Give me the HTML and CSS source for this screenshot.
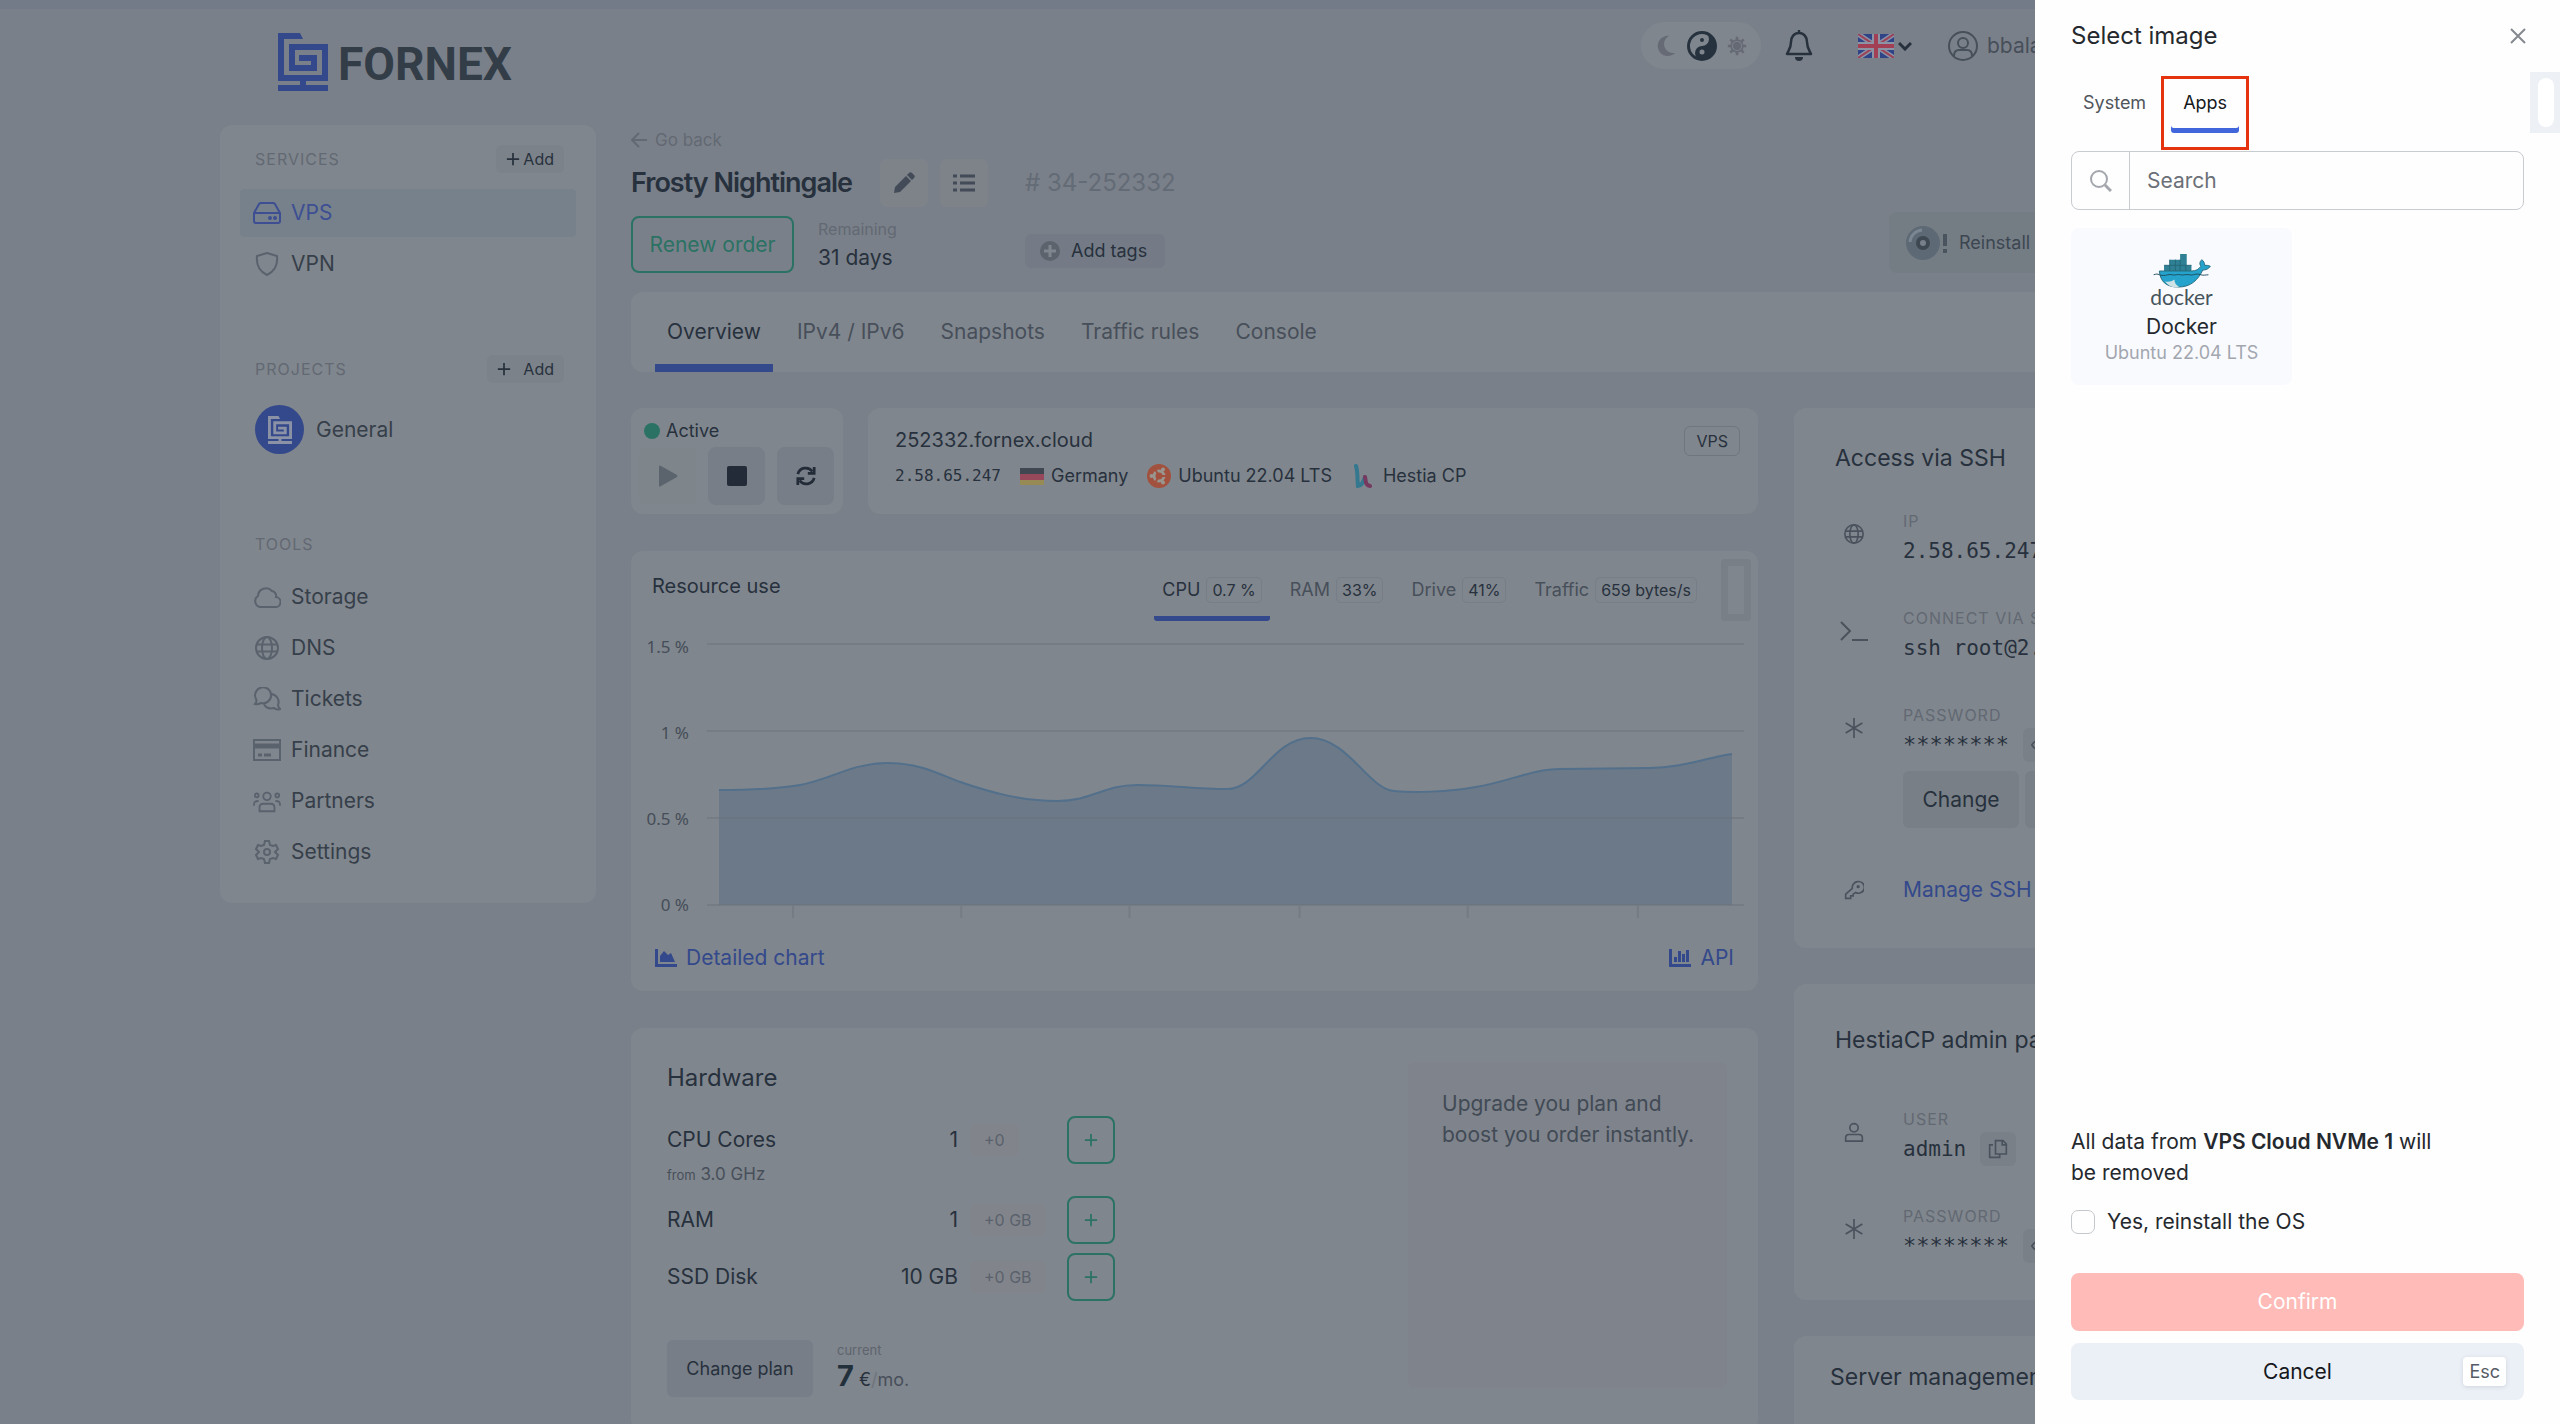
FILE: index.html
```html
<!doctype html>
<html lang="en">
    <head>
        <meta charset="UTF-8" />
        <meta name="viewport" content="width=device-width, initial-scale=1.0" />
        <title>Frosty Nightingale - Fornex</title>
        <link rel="stylesheet" href="styles.css">
    </head>
    <body>
        <!-- Shared icons -->
        <svg class="sprite" aria-hidden="true">
            <symbol id="i-mark" viewBox="0 0 50 58">
                <path fill="currentColor" d="M0 0h22l3 6H6v36h38V17H17v15h16v-4H21v-6h18v16H11V11h39v37H28v4h22v6H0v-6h22v-4H0z" />
            </symbol>
            <symbol id="i-globe" viewBox="0 0 24 24">
                <circle cx="12" cy="12" r="11" />
                <ellipse cx="12" cy="12" rx="5" ry="11" />
                <path d="M1.500 8.500h21M1.500 15.500h21" />
            </symbol>
            <symbol id="i-plus" viewBox="0 0 16 16"><path d="M8 1v14M1 8h14" /></symbol>
            <symbol id="i-star" viewBox="0 0 24 24"><path d="M12 0v24M2 6l20 12M22 6L2 18" /></symbol>
            <symbol id="i-eye" viewBox="0 0 24 24"><path d="M1 12s4-7 11-7 11 7 11 7-4 7-11 7S1 12 1 12z" /><circle cx="12" cy="12" r="3" /></symbol>
        </svg>

        <div class="page">
            <header class="header">
                <a class="logo" href="#" aria-label="Fornex">
                    <svg class="logo-mark"><use href="#i-mark" /></svg>
                    <span>FORNEX</span>
                </a>
                <div class="header-tools">
                    <div class="theme">
                        <button aria-label="Dark theme"><svg class="ic-22" viewBox="0 0 24 24"><path fill="currentColor" d="M15 1a11 11 0 1 0 7 18.500A10 10 0 0 1 15 1z" /></svg></button>
                        <button class="theme-on" aria-label="Auto theme">
                            <svg class="ic-30" viewBox="0 0 30 30">
                                <circle cx="15" cy="15" r="13.500" fill="none" stroke="currentColor" stroke-width="3" />
                                <path fill="currentColor" d="M15 1a14 14 0 0 1 0 28 7 7 0 0 1 0-14 7 7 0 0 0 0-14z" />
                                <circle cx="15" cy="9" r="2" fill="currentColor" />
                                <circle cx="15" cy="21" r="2.500" fill="#80868d" />
                            </svg>
                        </button>
                        <button aria-label="Light theme">
                            <svg class="ic-20" viewBox="0 0 24 24" fill="none" stroke="currentColor" stroke-width="2">
                                <circle cx="12" cy="12" r="4" fill="currentColor" /><circle cx="12" cy="12" r="7" />
                                <path stroke-width="3" d="M12 1v4M12 19v4M1 12h4M19 12h4M4 4l3 3M17 17l3 3M20 4l-3 3M7 17l-3 3" />
                            </svg>
                        </button>
                    </div>
                    <button class="bell" aria-label="Notifications">
                        <svg viewBox="0 0 28 32" fill="none" stroke="currentColor" stroke-width="2.500" stroke-linejoin="round">
                            <path d="M14 3c-5 0-8 4-8 9 0 6-2 8-4 12h24c-2-4-4-6-4-12 0-5-3-9-8-9zM14 0v3" />
                            <path fill="currentColor" stroke="none" d="M10 27h8a4 4 0 0 1-8 0z" />
                        </svg>
                    </button>
                    <button class="lang" aria-label="Language">
                        <svg class="flag-uk" viewBox="0 0 36 24" preserveAspectRatio="none">
                            <rect width="36" height="24" rx="2" fill="#2f4486" />
                            <path d="M0 0l36 24M36 0L0 24" stroke="#8c93a5" stroke-width="5" />
                            <path d="M0 0l36 24M36 0L0 24" stroke="#9c4258" stroke-width="2" />
                            <path d="M18 0v24M0 12h36" stroke="#8c93a5" stroke-width="8" />
                            <path d="M18 0v24M0 12h36" stroke="#a33f55" stroke-width="4" />
                        </svg>
                        <svg class="chev" viewBox="0 0 14 10" fill="none" stroke="currentColor" stroke-width="3"><path d="M1 2l6 6 6-6" /></svg>
                    </button>
                    <a class="user" href="#">
                        <svg class="ic-30" viewBox="0 0 30 30" fill="none" stroke="currentColor" stroke-width="2">
                            <circle cx="15" cy="15" r="14" /><circle cx="15" cy="12" r="5" />
                            <path d="M6 25c0-4 2-6 5-6h8c3 0 5 2 5 6" />
                        </svg>
                        <span>bbalance</span>
                    </a>
                </div>
            </header>

            <div class="layout">
                <nav class="card sidebar">
                    <div class="side-head">
                        <span class="caps">Services</span>
                        <button class="add-btn"><svg class="ic-14"><use href="#i-plus" /></svg>Add</button>
                    </div>
                    <a class="side-link active" href="#">
                        <svg viewBox="0 0 28 24"><path d="M1 12L6 3q1-1 2-1h12q1 0 2 1l5 9v8q0 2-2 2H3q-2 0-2-2zM1 12h26" /><circle cx="17" cy="17" r="1" /><circle cx="22" cy="17" r="1" /></svg>VPS
                    </a>
                    <a class="side-link" href="#">
                        <svg viewBox="0 0 28 24"><path d="M14 1l10 3c1 9-2 15-10 19C6 19 3 13 4 4z" /></svg>VPN
                    </a>
                    <div class="side-head projects">
                        <span class="caps">Projects</span>
                        <button class="add-btn wide"><svg class="ic-14"><use href="#i-plus" /></svg>Add</button>
                    </div>
                    <a class="project" href="#">
                        <span class="avatar"><svg><use href="#i-mark" /></svg></span>General
                    </a>
                    <div class="side-head tools"><span class="caps">Tools</span></div>
                    <a class="side-link" href="#"><svg viewBox="0 0 28 24"><path d="M7 22a6 6 0 0 1-2-11 8 8 0 0 1 14-5 5 5 0 0 1 4 6 5 5 0 0 1-1 10z" /></svg>Storage</a>
                    <a class="side-link" href="#"><svg viewBox="0 0 24 24"><use href="#i-globe" /></svg>DNS</a>
                    <a class="side-link" href="#"><svg viewBox="0 0 28 24"><path d="M2 17c1-1 2-3 1-5a8 8 0 1 1 5 4c-2 1-4 2-6 1zM18 7a8 8 0 0 1 7 11c0 2 1 3 2 4-3 1-5 0-6-1-4 1-8 0-10-4" /></svg>Tickets</a>
                    <a class="side-link" href="#"><svg viewBox="0 0 28 24"><path d="M1 2h26v20H1z" /><path d="M1 8h26" stroke-width="5" /><path d="M5 17h4M11 17h7" stroke-width="3" /></svg>Finance</a>
                    <a class="side-link" href="#"><svg viewBox="0 0 30 24"><circle cx="15" cy="7" r="4" /><circle cx="4" cy="6" r="2" /><circle cx="26" cy="6" r="2" /><path d="M7 23v-4c0-3 2-4 4-4h8c2 0 4 1 4 4v4zM1 17c0-4 1-5 5-5M29 17c0-4-1-5-5-5" /></svg>Partners</a>
                    <a class="side-link" href="#"><svg viewBox="0 0 24 24"><path d="M10 1h4l1 4 3 1 3-1 2 4-3 3 3 3-2 4-3-1-3 1-1 4h-4l-1-4-3-1-3 1-2-4 3-3-3-3 2-4 3 1 3-1z" /><circle cx="12" cy="12" r="3" /></svg>Settings</a>
                </nav>

                <main class="content">
                    <a class="back" href="#">
                        <svg class="ic-16" viewBox="0 0 16 16" fill="none" stroke="currentColor" stroke-width="2"><path d="M8 1L1 8l7 7M1 8h15" /></svg>Go back
                    </a>
                    <div class="title-row">
                        <h1>Frosty Nightingale</h1>
                        <button class="square" aria-label="Rename"><svg class="ic-22" viewBox="0 0 22 22"><path fill="currentColor" d="M1 21l1-6L13 4l5 5L7 20zM14 3l2-2c1-1 2-1 3 0l2 2c1 1 1 2 0 3l-2 2z" /></svg></button>
                        <button class="square" aria-label="List"><svg class="ic-22" viewBox="0 0 22 20" stroke="currentColor" stroke-width="3"><path d="M0 3h4M0 10h4M0 17h4M7 3h15M7 10h15M7 17h15" /></svg></button>
                        <span class="order-id"># 34-252332</span>
                    </div>
                    <div class="order-row">
                        <button class="renew">Renew order</button>
                        <div class="remaining"><small>Remaining</small><span>31 days</span></div>
                        <button class="tags">
                            <svg class="ic-20" viewBox="0 0 20 20"><circle cx="10" cy="10" r="10" fill="#5c636d" /><path d="M10 4v12M4 10h12" stroke="#80868d" stroke-width="3" /></svg>Add tags
                        </button>
                        <button class="reinstall">
                            <svg viewBox="0 0 44 36">
                                <circle cx="18" cy="18" r="17" fill="#5d6975" /><path d="M5 17A13 13 0 0 1 17 5" fill="none" stroke="#7a8793" stroke-width="3" />
                                <circle cx="18" cy="18" r="5" fill="#78808a" stroke="#3e4853" stroke-width="4" /><path d="M40 9v12M40 24v4" stroke="#4a545f" stroke-width="4" />
                            </svg>Reinstall
                        </button>
                    </div>

                    <nav class="card tabs">
                        <a class="on" href="#">Overview</a>
                        <a href="#">IPv4 / IPv6</a>
                        <a href="#">Snapshots</a>
                        <a href="#">Traffic rules</a>
                        <a href="#">Console</a>
                    </nav>

                    <div class="columns">
                        <div class="col">
                            <div class="server-row">
                                <section class="card status">
                                    <p><i class="dot"></i>Active</p>
                                    <div class="power">
                                        <button disabled aria-label="Start"><svg viewBox="0 0 20 22"><path fill="currentColor" d="M1 1q1-1 2 0l16 9q1 1 0 2L3 21q-1 1-2 0z" /></svg></button>
                                        <button aria-label="Stop"><svg viewBox="0 0 20 20"><rect width="20" height="20" rx="2" fill="currentColor" /></svg></button>
                                        <button aria-label="Restart"><svg viewBox="0 0 22 22" fill="none" stroke="currentColor" stroke-width="3"><path d="M2 9a9 9 0 0 1 16-3M20 1v7h-7M20 13a9 9 0 0 1-16 3M2 21v-7h7" /></svg></button>
                                    </div>
                                </section>
                                <section class="card info">
                                    <div>
                                        <p class="domain">252332.fornex.cloud</p>
                                        <div class="facts">
                                            <code>2.58.65.247</code>
                                            <span><svg class="flag-de" viewBox="0 0 24 17"><path fill="#414750" d="M0 0h24v6H0z" /><path fill="#97485a" d="M0 6h24v6H0z" /><path fill="#978a55" d="M0 12h24v5H0z" /></svg>Germany</span>
                                            <span><svg class="ic-24" viewBox="0 0 24 24"><circle cx="12" cy="12" r="12" fill="#a1513d" /><circle cx="12" cy="12" r="5" fill="none" stroke="#99958f" stroke-width="3" /><path d="M12 12L8 5M12 12l-4 7M12 12h9" stroke="#a1513d" stroke-width="2" /><circle cx="4.500" cy="12" r="2" fill="#99958f" /><circle cx="16" cy="5.500" r="2" fill="#99958f" /><circle cx="16" cy="18.500" r="2" fill="#99958f" /></svg>Ubuntu 22.04 LTS</span>
                                            <span><svg class="hestia" viewBox="0 0 18 24" fill="none" stroke-width="4" stroke-linecap="round"><path stroke="#33788f" d="M2 2c2 6 1 12 2 20 4 0 5-4 7-9" /><path stroke="#77395f" d="M11 13c1 4 0 8 5 9" /></svg>Hestia CP</span>
                                        </div>
                                    </div>
                                    <span class="type">VPS</span>
                                </section>
                            </div>

                            <section class="card usage">
                                <div class="usage-head">
                                    <h2>Resource use</h2>
                                    <div class="metrics">
                                        <button class="on">CPU <b>0.7 %</b></button>
                                        <button>RAM <b>33%</b></button>
                                        <button>Drive <b>41%</b></button>
                                        <button>Traffic <b>659 bytes/s</b></button>
                                    </div>
                                    <i class="scroll-hint"></i>
                                </div>
                                <div class="chart">
                                    <div class="axis"><span>1.5 %</span><span>1 %</span><span>0.5 %</span><span>0 %</span></div>
                                    <svg viewBox="0 0 1036 280" preserveAspectRatio="none">
                                        <path class="area" d="M12 267V152C50 152 75 150 93 147C125 141 145 125 180 125C215 125 235 138 253 144C285 155 315 163 350 163C385 163 395 147 430 147C465 147 485 151 520 151C550 151 565 100 603 100C640 100 660 150 686 153C705 155 740 154 768 149C800 144 825 131 852 131L942 130C975 130 1000 119 1024 116V267z" />
                                        <path class="curve" d="M12 152C50 152 75 150 93 147C125 141 145 125 180 125C215 125 235 138 253 144C285 155 315 163 350 163C385 163 395 147 430 147C465 147 485 151 520 151C550 151 565 100 603 100C640 100 660 150 686 153C705 155 740 154 768 149C800 144 825 131 852 131L942 130C975 130 1000 119 1024 116" />
                                        <path class="grid" d="M0 6h1036M0 93h1036M0 180h1036M0 267h1036M86 267v15M254 267v15M422 267v15M592 267v15M760 267v15M930 267v15" />
                                    </svg>
                                </div>
                                <div class="usage-foot">
                                    <a href="#"><svg viewBox="0 0 22 18"><path fill="currentColor" d="M0 0h3v15h19v3H0zM5 13V7l4-5 4 4 3-2 4 9z" /></svg>Detailed chart</a>
                                    <a href="#"><svg viewBox="0 0 22 18"><path fill="currentColor" d="M0 0h3v15h19v3H0zM5 8h3v5H5zM9 2h3v11H9zM13 5h3v8h-3zM17 1h3v12h-3z" /></svg>API</a>
                                </div>
                            </section>

                            <section class="card hardware">
                                <div class="specs">
                                    <h2>Hardware</h2>
                                    <div class="spec">
                                        <span>CPU Cores</span><span class="val">1</span><span class="extra">+0</span>
                                        <button class="plus" aria-label="Add CPU"><svg class="ic-14"><use href="#i-plus" /></svg></button>
                                    </div>
                                    <p class="freq"><small>from</small> 3.0 GHz</p>
                                    <div class="spec">
                                        <span>RAM</span><span class="val">1</span><span class="extra">+0 GB</span>
                                        <button class="plus" aria-label="Add RAM"><svg class="ic-14"><use href="#i-plus" /></svg></button>
                                    </div>
                                    <div class="spec">
                                        <span>SSD Disk</span><span class="val">10 GB</span><span class="extra">+0 GB</span>
                                        <button class="plus" aria-label="Add disk"><svg class="ic-14"><use href="#i-plus" /></svg></button>
                                    </div>
                                    <div class="plan">
                                        <button>Change plan</button>
                                        <div><small>current</small><p><strong>7</strong> <em>€</em><s>/</s>mo.</p></div>
                                    </div>
                                </div>
                                <div class="upgrade">Upgrade you plan and<br />boost you order instantly.</div>
                            </section>
                        </div>

                        <div class="col side-col">
                            <section class="card access">
                                <h2>Access via SSH</h2>
                                <div class="cred">
                                    <svg viewBox="0 0 24 24"><use href="#i-globe" /></svg>
                                    <div><span class="caps">IP</span><code>2.58.65.247</code></div>
                                </div>
                                <div class="cred">
                                    <svg class="term" viewBox="0 0 28 20"><path d="M1 1l9 9-9 9M12 19h16" /></svg>
                                    <div><span class="caps">Connect via SSH</span><code>ssh root@2.58.65.247</code></div>
                                </div>
                                <div class="cred">
                                    <svg viewBox="0 0 24 24"><use href="#i-star" /></svg>
                                    <div>
                                        <span class="caps">Password</span>
                                        <code class="stars">******** <button class="mini" aria-label="Show"><svg><use href="#i-eye" /></svg></button></code>
                                        <div class="cred-actions"><button>Change</button><button>Reset</button></div>
                                    </div>
                                </div>
                                <div class="cred key">
                                    <svg viewBox="0 0 24 24"><path d="M16 2a7 7 0 1 1-2 13l-3 2v2H8v3H2v-5l8-7a7 7 0 0 1 6-8z" /><circle cx="17" cy="8" r="1" /></svg>
                                    <a href="#">Manage SSH keys</a>
                                </div>
                            </section>
                            <section class="card hestia-card">
                                <h2>HestiaCP admin panel</h2>
                                <div class="cred">
                                    <svg viewBox="0 0 24 24"><circle cx="12" cy="7" r="5" /><path d="M2 23v-4c0-3 2-4 4-4h12c2 0 4 1 4 4v4z" /></svg>
                                    <div>
                                        <span class="caps">User</span>
                                        <code>admin <button class="mini" aria-label="Copy"><svg viewBox="0 0 24 24"><path d="M9 2h9l4 4v12H9zM17 2v5h5M6 7H2v15h12v-4" /></svg></button></code>
                                    </div>
                                </div>
                                <div class="cred">
                                    <svg viewBox="0 0 24 24"><use href="#i-star" /></svg>
                                    <div>
                                        <span class="caps">Password</span>
                                        <code class="stars">******** <button class="mini" aria-label="Show"><svg><use href="#i-eye" /></svg></button></code>
                                    </div>
                                </div>
                            </section>
                            <section class="card manage"><h2>Server management</h2></section>
                        </div>
                    </div>
                </main>
            </div>
        </div>

        <aside class="drawer">
            <div class="drawer-head">
                <h2>Select image</h2>
                <button aria-label="Close"><svg viewBox="0 0 16 16" fill="none" stroke="currentColor" stroke-width="2"><path d="M1 1l14 14M15 1L1 15" /></svg></button>
            </div>
            <div class="drawer-tabs">
                <button>System</button>
                <button class="on">Apps</button>
                <i class="drawer-scroll"></i>
            </div>
            <div class="search">
                <label for="search" aria-label="Search"><svg viewBox="0 0 22 22" fill="none" stroke="currentColor" stroke-width="2"><circle cx="9" cy="9" r="8" /><path stroke-width="3" d="M15 15l6 6" /></svg></label>
                <input id="search" type="text" placeholder="Search" />
            </div>
            <button class="image">
                <svg viewBox="0 0 60 36">
                    <g fill="#2f8094"><path d="M11 12h29v6H11zM17 6h16v6H17zM28 0h7v12h-7z" /></g>
                    <path stroke="#23677a" d="M17 6v12M23 6v12M28 6v12M34 12v6M11 12h29" />
                    <path fill="#25a3cd" stroke="#276a7d" d="M6 18h34c5 0 8-2 10-5-2-3-1-5 1-7 2 2 3 3 3 6 2 0 4 0 6 1-2 3-5 4-8 4-5 10-12 18-26 18C13 35 7 29 6 18z" />
                    <path fill="#cfe3e6" d="M12 29c4 1 7 0 10-2 0 4 2 6 5 8-7 1-11-1-15-6z" />
                    <path fill="none" stroke="#1f4d5c" d="M0 22c3-1 4-1 6 0s6 1 9 0 6 1 9 0 6 1 9 0 6 1 9 0 5-1 8 0 5 0 8 0" />
                </svg>
                <span class="wordmark">docker</span>
                <span>Docker</span>
                <small>Ubuntu 22.04 LTS</small>
            </button>
            <div class="drawer-foot">
                <p>All data from <strong>VPS Cloud NVMe 1</strong> will<br />be removed</p>
                <label class="check"><input type="checkbox" />Yes, reinstall the OS</label>
                <button class="confirm" disabled>Confirm</button>
                <button class="cancel">Cancel<kbd>Esc</kbd></button>
            </div>
        </aside>
    </body>
</html>
```
FILE: styles.css
```css
:root {
    --page: #7a8089;
    --card: #80868d;
    --soft: #777e87;
    --text: #27313d;
    --nav: #363f4a;
    --muted: #474f5a;
    --faint: #626973;
    --blue: #33498b;
    --green: #2b7264;
    --line: #6f767f;
}

* {
    margin: 0;
    padding: 0;
    box-sizing: border-box;
}

body {
    font: 21px/32px Inter, "Liberation Sans", sans-serif;
    background: var(--page);
    color: var(--text);
    height: 100vh;
    overflow: hidden;
}

a {
    color: inherit;
    text-decoration: none;
}

button {
    font: inherit;
    color: inherit;
    background: none;
    border: 0;
}

h1,
h2 {
    font-size: 24px;
    font-weight: 400;
}

.sprite {
    position: absolute;
    width: 0;
    height: 0;
}

.ic-14 { width: 14px; height: 14px; stroke: currentColor; stroke-width: 2; }
.ic-16 { width: 16px; height: 16px; }
.ic-20 { width: 20px; height: 20px; }
.ic-22 { width: 22px; height: 22px; }
.ic-24 { width: 24px; height: 24px; }
.ic-30 { width: 30px; height: 30px; }

.page {
    border-top: 9px solid #747b88;
}

.card {
    background: var(--card);
    border-radius: 12px;
}

.caps {
    font-size: 16px;
    line-height: 24px;
    letter-spacing: 1px;
    text-transform: uppercase;
    color: var(--faint);
}

/* Header */
.header {
    max-width: 2120px;
    height: 116px;
    margin: 0 auto;
    padding: 13px 58px 0;
    display: flex;
    align-items: flex-start;
    justify-content: space-between;
}

.logo {
    display: flex;
    align-items: center;
    gap: 10px;
    margin-top: 9px;
    font: 700 46px/58px Roboto, sans-serif;
    color: #333d48;
}

.logo span {
    padding-top: 4px;
}

.logo-mark {
    width: 50px;
    height: 58px;
    color: var(--blue);
}

.header-tools {
    display: flex;
    align-items: center;
    height: 47px;
    width: 641px;
}

.header-tools button {
    display: flex;
    align-items: center;
}

.theme {
    display: flex;
    align-items: center;
    gap: 10px;
    height: 47px;
    padding: 0 14px;
    border-radius: 24px;
    background: var(--card);
    color: #656a75;
}

.theme-on {
    color: #26333f;
}

.bell {
    margin-left: 24px;
}

.bell svg {
    width: 28px;
    height: 32px;
}

.lang {
    gap: 4px;
    margin-left: 45px;
}

.flag-uk {
    width: 36px;
    height: 24px;
}

.chev {
    width: 14px;
    height: 10px;
}

.user {
    display: flex;
    align-items: center;
    gap: 9px;
    margin-left: 36px;
    color: var(--muted);
}

/* Sidebar */
.layout {
    max-width: 2120px;
    margin: 0 auto;
    display: grid;
    grid-template-columns: 376px minmax(0, 1fr);
    gap: 35px;
    align-items: start;
}

.sidebar {
    padding: 20px 20px 24px;
}

.side-head {
    display: flex;
    align-items: center;
    justify-content: space-between;
    height: 28px;
    padding: 0 12px 0 15px;
    margin-bottom: 16px;
}

.projects {
    margin-top: 67px;
    margin-bottom: 22px;
}

.tools {
    margin-top: 76px;
    margin-bottom: 15px;
}

.add-btn {
    display: flex;
    align-items: center;
    gap: 3px;
    padding: 0 10px;
    border-radius: 6px;
    background: #7c8289;
    font-size: 16px;
    line-height: 28px;
}

.add-btn.wide {
    gap: 12px;
}

.side-link {
    display: flex;
    align-items: center;
    gap: 10px;
    height: 48px;
    margin-bottom: 3px;
    padding-left: 13px;
    border-radius: 4px;
    color: var(--nav);
}

.side-link svg {
    width: 28px;
    height: 24px;
    fill: none;
    stroke: #5a626d;
    stroke-width: 2;
}

.side-link.active {
    background: #76818b;
    color: #3d4e93;
}

.side-link.active svg {
    stroke: #3d4e93;
}

.project {
    display: flex;
    align-items: center;
    gap: 12px;
    padding-left: 15px;
    color: var(--nav);
}

.avatar {
    display: grid;
    place-items: center;
    width: 49px;
    height: 49px;
    border-radius: 50%;
    background: var(--blue);
    color: #8b92a5;
}

.avatar svg {
    width: 24px;
    height: 28px;
}

/* Order heading */
.back {
    display: flex;
    align-items: center;
    gap: 8px;
    font-size: 17px;
    line-height: 30px;
    color: var(--faint);
}

.title-row {
    display: flex;
    align-items: center;
    height: 48px;
    margin-top: 4px;
    gap: 12px;
}

h1 {
    width: 237px;
    font-size: 27px;
    font-weight: 600;
    letter-spacing: -1px;
    white-space: nowrap;
}

.square {
    display: grid;
    place-items: center;
    width: 48px;
    height: 48px;
    border-radius: 6px;
    background: #7d8389;
    color: #434b58;
}

.order-id {
    margin-left: 25px;
    font-size: 24px;
    color: #636b76;
}

.order-row {
    display: flex;
    align-items: flex-end;
    height: 66px;
}

.renew {
    width: 163px;
    height: 57px;
    border: 2px solid var(--green);
    border-radius: 8px;
    color: var(--green);
}

.remaining {
    display: flex;
    flex-direction: column;
    width: 231px;
    padding-left: 24px;
    line-height: 30px;
}

.remaining small {
    font-size: 16px;
    line-height: 28px;
    color: var(--faint);
}

.tags {
    display: flex;
    align-items: center;
    gap: 11px;
    margin-bottom: 5px;
    padding: 0 18px 0 15px;
    border-radius: 6px;
    background: #747b86;
    font-size: 18px;
    line-height: 34px;
}

.reinstall {
    display: flex;
    align-items: center;
    gap: 10px;
    width: 451px;
    height: 61px;
    margin-left: auto;
    padding-left: 16px;
    border-radius: 8px;
    background: #757d84;
    font-size: 18px;
    color: #3c4651;
}

.reinstall svg {
    width: 44px;
    height: 36px;
}

/* Tabs */
.tabs {
    display: flex;
    gap: 12px;
    height: 80px;
    margin: 19px 0 36px;
    padding: 0 24px;
}

.tabs a {
    padding: 0 12px;
    line-height: 80px;
    color: var(--muted);
}

.tabs .on {
    color: var(--text);
    box-shadow: inset 0 -8px var(--blue);
    border-radius: 4px 4px 0 0;
}

.columns {
    display: grid;
    grid-template-columns: 1127px minmax(0, 1fr);
    gap: 36px;
}

.col {
    display: flex;
    flex-direction: column;
    gap: 37px;
    min-width: 0;
}

.side-col {
    gap: 36px;
}

/* Server state */
.server-row {
    display: grid;
    grid-template-columns: 212px 1fr;
    gap: 25px;
    height: 106px;
}

.status {
    padding: 7px 8px;
    font-size: 18px;
}

.status p {
    display: flex;
    align-items: center;
    gap: 6px;
    padding-left: 5px;
}

.dot {
    width: 16px;
    height: 16px;
    border-radius: 50%;
    background: var(--green);
}

.power {
    display: grid;
    grid-template-columns: repeat(3, 57px);
    gap: 12px;
}

.power button {
    display: grid;
    place-items: center;
    height: 58px;
    border-radius: 8px;
    background: #777e87;
    color: #222b37;
}

.power button:disabled {
    background: #7e858b;
    color: #5b636d;
}

.power svg {
    width: 20px;
    height: 22px;
}

.info {
    display: flex;
    justify-content: space-between;
    align-items: flex-start;
    padding: 16px 18px 14px 27px;
}

.domain {
    font-size: 20px;
    line-height: 32px;
}

.facts {
    display: flex;
    align-items: center;
    gap: 19px;
    height: 40px;
    font-size: 18px;
}

.facts code {
    font-size: 16px;
}

.facts span {
    display: flex;
    align-items: center;
    gap: 7px;
}

.flag-de {
    width: 24px;
    height: 17px;
}

.hestia {
    width: 18px;
    height: 24px;
    margin: 0 4px 0 3px;
}

.type {
    margin-top: 2px;
    padding: 0 11px;
    border: 1px solid var(--line);
    border-radius: 6px;
    font-size: 16px;
    line-height: 28px;
}

code {
    font-family: "DejaVu Sans Mono", monospace;
}

/* Resource usage */
.usage {
    height: 440px;
    padding-top: 8px;
}

.usage-head {
    display: flex;
    height: 62px;
    padding: 0 7px 0 21px;
}

.usage-head h2 {
    font-size: 20px;
    line-height: 54px;
}

.metrics {
    display: flex;
    gap: 12px;
    margin-left: auto;
}

.metrics button {
    display: flex;
    align-items: center;
    gap: 6px;
    padding: 0 8px;
    font-size: 18px;
    color: var(--muted);
}

.metrics b {
    padding: 0 5px;
    border: 1px solid #777e87;
    border-radius: 5px;
    font-size: 16px;
    font-weight: 400;
    line-height: 24px;
    color: var(--text);
}

.metrics .on {
    color: var(--text);
    border-bottom: 5px solid var(--blue);
    border-radius: 3px;
    padding-top: 5px;
}

.scroll-hint {
    width: 30px;
    margin-left: 16px;
    border: 7px solid #797f87;
    border-radius: 4px;
}

.chart {
    display: grid;
    grid-template-columns: 58px 1fr;
    gap: 18px;
    height: 296px;
    padding: 17px 14px 0 0;
}

.axis {
    display: grid;
    grid-template-rows: repeat(4, 86px);
    font: 17px/18px "Noto Sans", sans-serif;
    text-align: right;
    color: #454d58;
}

.chart svg {
    width: 100%;
    height: 280px;
}

.area {
    fill: #6c7988;
}

.curve,
.grid {
    fill: none;
    stroke: #52708b;
    stroke-width: 2;
}

.grid {
    stroke: #6a717b;
    stroke-opacity: 0.5;
}

.usage-foot {
    display: flex;
    justify-content: space-between;
    padding: 25px 24px 0;
    color: var(--blue);
}

.usage-foot a {
    display: flex;
    align-items: center;
    gap: 9px;
}

.usage-foot svg {
    width: 22px;
    height: 18px;
}

/* Hardware */
.hardware {
    display: flex;
    justify-content: space-between;
    padding: 34px 31px 34px 36px;
}

.specs {
    width: 448px;
}

.spec {
    display: grid;
    grid-template-columns: 1fr 100px 109px 48px;
    align-items: center;
    height: 57px;
}

.specs h2 {
    margin-bottom: 17px;
}

.val {
    text-align: right;
}

.extra {
    justify-self: start;
    margin-left: 12px;
    padding: 0 14px;
    border-radius: 6px;
    background: #81858b;
    font-size: 16px;
    line-height: 32px;
    color: #5a616c;
}

.plus {
    display: grid;
    place-items: center;
    width: 48px;
    height: 48px;
    border: 2px solid var(--green);
    border-radius: 8px;
    color: var(--green);
}

.freq {
    height: 23px;
    font-size: 17px;
    line-height: 12px;
    color: var(--muted);
}

.freq small {
    font-size: 13px;
}

.plan {
    display: flex;
    gap: 24px;
    margin-top: 35px;
}

.plan button {
    width: 146px;
    height: 57px;
    border-radius: 6px;
    background: #777e87;
    font-size: 18px;
}

.plan small {
    display: block;
    font-size: 13px;
    line-height: 20px;
    color: #5d646e;
}

.plan p {
    font-size: 18px;
    color: var(--muted);
}

.plan strong {
    font-size: 29px;
    color: #22303c;
}

.plan em {
    font-style: normal;
    color: var(--text);
}

.plan s {
    text-decoration: none;
    color: #6d747d;
}

.upgrade {
    width: 319px;
    height: 326px;
    padding: 26px 0 0 34px;
    border-radius: 8px;
    background: #7f838b;
    line-height: 31px;
    color: #414a55;
    white-space: nowrap;
}

/* Credentials */
.side-col h2 {
    font-size: 23px;
    white-space: nowrap;
}

.access {
    height: 540px;
    padding: 34px 41px;
}

.hestia-card {
    height: 316px;
    padding: 40px 41px;
}

.manage {
    height: 316px;
    padding: 25px 36px;
}

.access h2 {
    margin-bottom: 35px;
}

.hestia-card h2 {
    margin-bottom: 51px;
}

.cred {
    display: grid;
    grid-template-columns: 38px 1fr;
    gap: 30px;
    height: 97px;
    white-space: nowrap;
}

.cred svg {
    width: 20px;
    height: 20px;
    fill: none;
    stroke: #4a525d;
    stroke-width: 2;
}

.cred > svg {
    justify-self: center;
    margin-top: 15px;
}

.cred > .term {
    width: 28px;
}

.cred .caps {
    display: block;
}

.cred code {
    display: flex;
    align-items: center;
    gap: 14px;
    height: 36px;
}

.cred .stars {
    font-size: 22px;
}

.mini {
    display: grid;
    place-items: center;
    width: 36px;
    height: 34px;
    border-radius: 6px;
    background: #7a8088;
}

.cred-actions {
    display: flex;
    gap: 6px;
    margin-top: 8px;
}

.cred-actions button {
    width: 116px;
    height: 57px;
    border-radius: 6px;
    background: #787f86;
}

.key {
    margin-top: 74px;
    color: var(--blue);
}

.key > svg {
    margin-top: 6px;
}

/* Image drawer */
.drawer {
    position: fixed;
    top: 0;
    right: 0;
    bottom: 0;
    display: flex;
    flex-direction: column;
    width: 525px;
    padding: 17px 34px 24px 36px;
    background: #fefefe;
    color: #25292e;
}

.drawer-head {
    display: flex;
    align-items: center;
    justify-content: space-between;
    height: 38px;
}

.drawer-head button {
    display: grid;
    color: #85898f;
}

.drawer-head svg {
    width: 16px;
    height: 16px;
}

.drawer-tabs {
    display: flex;
    gap: 13px;
    height: 60px;
    margin-top: 18px;
    position: relative;
}

.drawer-tabs button {
    padding: 0 12px;
    font-size: 18px;
    color: #50555c;
}

.drawer-tabs .on {
    position: relative;
    color: #15181c;
    box-shadow: inset 0 -5px #4166dc;
    border-radius: 3px;
}

/* Highlight frame drawn around the selected tab */
.drawer-tabs .on::after {
    content: "";
    position: absolute;
    inset: 3px -10px -17px;
    border: 3px solid #e5320f;
}

.drawer-scroll {
    position: absolute;
    right: -34px;
    top: -1px;
    width: 30px;
    height: 61px;
    background: #edf1f6;
}

.drawer-scroll::before {
    content: "";
    position: absolute;
    inset: 6px 6px 6px 8px;
    border-radius: 8px;
    background: #fff;
}

.search {
    display: flex;
    height: 59px;
    margin: 18px 2px 0 0;
    border: 1px solid #c8cbcf;
    border-radius: 8px;
}

.search label {
    display: grid;
    place-items: center;
    width: 58px;
    border-right: 1px solid #c8cbcf;
    color: #a3a7ad;
}

.search svg {
    width: 22px;
    height: 22px;
}

.search input {
    flex: 1;
    min-width: 0;
    padding: 0 17px;
    border: 0;
    outline: 0;
    background: none;
    font: inherit;
}

.search input::placeholder {
    color: #6b7078;
    opacity: 1;
}

.image {
    display: flex;
    flex-direction: column;
    align-items: center;
    width: 221px;
    height: 157px;
    margin-top: 18px;
    padding-top: 26px;
    border-radius: 8px;
    background: #f9fafe;
    line-height: 29px;
}

.image svg {
    width: 60px;
    height: 34px;
    fill: none;
}

.image .wordmark {
    font: 21px/18px Lato, sans-serif;
    color: #46545b;
}

.image small {
    font-size: 18px;
    line-height: 24px;
    color: #a2a6af;
}

.image span + span {
    margin-top: 6px;
}

.drawer-foot {
    margin-top: auto;
    padding-right: 2px;
}

.drawer-foot p {
    line-height: 31px;
}

.drawer-foot strong {
    font-weight: 600;
}

.check {
    display: flex;
    align-items: center;
    gap: 12px;
    margin: 18px 0 35px;
}

.check input {
    appearance: none;
    width: 24px;
    height: 24px;
    border: 1px solid #c4c7cc;
    border-radius: 7px;
}

.confirm,
.cancel {
    display: block;
    width: 100%;
    height: 58px;
    border-radius: 8px;
}

.confirm {
    margin-bottom: 12px;
    background: #febbb7;
    color: #fff;
}

.cancel {
    position: relative;
    height: 57px;
    background: #ebeff6;
    color: #15181c;
}

kbd {
    position: absolute;
    right: 18px;
    top: 14px;
    padding: 0 6px;
    border-radius: 4px;
    background: #fff;
    box-shadow: 0 1px 4px #cfd4dc;
    font: 18px/29px Inter, sans-serif;
    color: #565c66;
}
```
